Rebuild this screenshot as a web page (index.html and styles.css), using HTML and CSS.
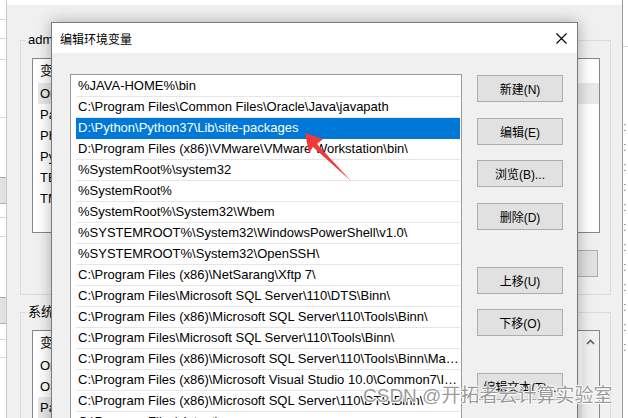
FILE: index.html
```html
<!DOCTYPE html>
<html lang="zh-CN">
<head>
  <meta charset="UTF-8">
  <title>编辑环境变量</title>
  <link rel="stylesheet" href="styles.css">
</head>
<body>
  <div class="desk">
    <div class="edge-left">
      <div class="ln m19"></div>
      <div class="ln m18"></div>
      <div class="ln m20"></div>
      <div class="ln m57"></div>
      <div class="bt m59"></div>
      <div class="ln m13"></div>
      <div class="ln m18"></div>
      <div class="bt m60"></div>
      <div class="ln m15"></div>
      <div class="ln m17"></div>
    </div>

    <div class="win">
      <div class="win-top"></div>
      <fieldset class="group g1">
        <legend>admin 的用户变量(U)</legend>
        <div class="list l1">
          <div class="col">
            <div class="lhead">变量</div>
            <div class="lrow dim">OneDrive</div>
            <div class="lrow">Path</div>
            <div class="lrow">PhpStorm</div>
            <div class="lrow">PyCharm</div>
            <div class="lrow">TEMP</div>
            <div class="lrow">TMP</div>
          </div>
        </div>
        <div class="bar">
          <div class="btn wide">编辑(I)...</div>
        </div>
      </fieldset>
      <fieldset class="group g2">
        <legend>系统变量(S)</legend>
        <div class="list l2">
          <div class="col">
            <div class="lhead">变量</div>
            <div class="lrow">OnlineServices</div>
            <div class="lrow">OS</div>
            <div class="lrow dim">Path</div>
          </div>
          <div class="sb">
            <svg width="9" height="6" viewBox="0 0 9 6"><path d="M1 5 L4.5 1.5 L8 5" fill="none" stroke="#606060" stroke-width="1.6"/></svg>
          </div>
        </div>
      </fieldset>
    </div>

    <div class="edge-right">
      <div class="er-top"></div>
      <div class="er-dots">:<br>:<br>:<br>:<br>:<br>:<br>:<br>:<br>:<br>:<br>:<br>:</div>
    </div>

    <div class="dlg">
      <div class="dlg-title">
        <span>编辑环境变量</span>
        <svg class="close" width="11" height="11" viewBox="0 0 11 11"><path d="M0.5 0.5 L10.5 10.5 M10.5 0.5 L0.5 10.5" stroke="#000" stroke-width="1.1"/></svg>
      </div>
      <div class="dlg-body">
        <div class="plist">
          <div class="prow">%JAVA-HOME%\bin</div>
          <div class="prow">C:\Program Files\Common Files\Oracle\Java\javapath</div>
          <div class="prow sel">D:\Python\Python37\Lib\site-packages</div>
          <div class="prow">D:\Program Files (x86)\VMware\VMware Workstation\bin\</div>
          <div class="prow">%SystemRoot%\system32</div>
          <div class="prow">%SystemRoot%</div>
          <div class="prow">%SystemRoot%\System32\Wbem</div>
          <div class="prow">%SYSTEMROOT%\System32\WindowsPowerShell\v1.0\</div>
          <div class="prow">%SYSTEMROOT%\System32\OpenSSH\</div>
          <div class="prow">C:\Program Files (x86)\NetSarang\Xftp 7\</div>
          <div class="prow">C:\Program Files\Microsoft SQL Server\110\DTS\Binn\</div>
          <div class="prow">C:\Program Files (x86)\Microsoft SQL Server\110\Tools\Binn\</div>
          <div class="prow">C:\Program Files\Microsoft SQL Server\110\Tools\Binn\</div>
          <div class="prow">C:\Program Files (x86)\Microsoft SQL Server\110\Tools\Binn\ManagementStudio\</div>
          <div class="prow">C:\Program Files (x86)\Microsoft Visual Studio 10.0\Common7\IDE\PrivateAssemblies\</div>
          <div class="prow">C:\Program Files (x86)\Microsoft SQL Server\110\DTS\Binn\</div>
          <div class="prow">C:\Program Files\dotnet\</div>
        </div>
        <div class="btns">
          <div class="btn">新建(N)</div>
          <div class="btn m16">编辑(E)</div>
          <div class="btn m15">浏览(B)...</div>
          <div class="btn m16">删除(D)</div>
          <div class="btn m37">上移(U)</div>
          <div class="btn m15">下移(O)</div>
          <div class="btn m37">编辑文本(T)...</div>
        </div>
      </div>
    </div>

    <svg class="arrow" width="628" height="418" viewBox="0 0 628 418">
      <polygon points="305,133 323,139 317,144 351,181 313,147 309,153" fill="#ef3a3a"/>
    </svg>

    <div class="mark">CSDN @开拓者云计算实验室</div>
  </div>
</body>
</html>
```

FILE: styles.css
```css
* {
  box-sizing: border-box;
}

html, body {
  margin: 0;
}

body {
  width: 628px;
  height: 418px;
  overflow: hidden;
  font-family: "Liberation Sans", "Noto Sans CJK SC", sans-serif;
  font-size: 13px;
  color: #000;
  background: #f0f0f0;
}

.desk {
  position: relative;
  display: grid;
  grid-template-columns: 7px 1fr 6px;
  height: 418px;
  overflow: hidden;
}

/* window sliver on the far left */
.edge-left {
  background: #fff;
  border-right: 1px solid #c8c8c8;
  display: flex;
  flex-direction: column;
}

.edge-left .ln {
  height: 1px;
  flex: none;
  background: #dadada;
}

.edge-left .bt {
  height: 27px;
  flex: none;
  background: #e1e1e1;
  border-top: 1px solid #adadad;
  border-bottom: 1px solid #adadad;
}

.m13 { margin-top: 13px; }
.m15 { margin-top: 15px; }
.m16 { margin-top: 16px; }
.m17 { margin-top: 17px; }
.m18 { margin-top: 18px; }
.m19 { margin-top: 19px; }
.m20 { margin-top: 20px; }
.m37 { margin-top: 37px; }
.m57 { margin-top: 57px; }
.m59 { margin-top: 59px; }
.m60 { margin-top: 60px; }

/* background window */
.win {
  background: #f0f0f0;
  display: flex;
  flex-direction: column;
  min-width: 0;
}

.win-top {
  height: 5px;
  flex: none;
  background: #fff;
}

.group {
  border: 1px solid #dcdcdc;
  margin: 27px 11px 0 13px;
  padding: 10px 10px 17px 11px;
  min-width: 0;
  flex: none;
}

.group legend {
  padding: 0 2px;
  margin-left: -6px;
  line-height: 16px;
  font-size: 13px;
  white-space: nowrap;
}

.g2 {
  margin-top: 9px;
}

.list {
  background: #fff;
  border: 1px solid #828790;
  display: flex;
  overflow: hidden;
}

.l1 {
  height: 175px;
}

.l2 {
  height: 200px;
}

.list .col {
  flex: 1;
}

.lhead {
  height: 24px;
  line-height: 24px;
  padding-left: 7px;
}

.lrow {
  height: 21px;
  line-height: 21px;
  margin-left: 5px;
  padding-left: 2px;
  white-space: nowrap;
}

.lrow.dim {
  background: #e8e8e8;
}

.sb {
  width: 17px;
  background: #f0f0f0;
  display: flex;
  justify-content: center;
  padding-top: 8px;
}

.bar {
  display: flex;
  justify-content: flex-end;
  margin-top: 17px;
  padding-right: 2px;
}

/* right window sliver */
.edge-right {
  background: #fff;
  border-left: 1px solid #9a9a9a;
  overflow: hidden;
}

.er-top {
  height: 47px;
  border-bottom: 1px solid #d6d6d6;
}

.er-dots {
  padding-top: 70px;
  color: #3d7fc4;
  font-size: 12px;
  line-height: 20px;
}

/* dialog */
.dlg {
  position: absolute;
  left: 51px;
  top: 22px;
  width: 527px;
  height: 420px;
  background: #f0f0f0;
  border: 1px solid #7a7a7a;
  box-shadow: 0 0 14px rgba(0, 0, 0, 0.3);
}

.dlg-title {
  height: 30px;
  background: #fff;
  display: flex;
  align-items: center;
  justify-content: space-between;
  padding: 0 10px 0 8px;
  font-size: 12px;
}

.dlg-body {
  display: flex;
  padding: 21px 0 0 18px;
}

.plist {
  width: 392px;
  height: 360px;
  background: #fff;
  border: 1px solid #9a9a9a;
  padding-top: 1px;
  overflow: hidden;
  flex: none;
}

.prow {
  height: 21px;
  line-height: 20px;
  border-bottom: 1px solid #e6e6e6;
  margin: 0 1px 0 5px;
  padding-left: 2px;
  white-space: nowrap;
  overflow: hidden;
  text-overflow: ellipsis;
}

.prow.sel {
  background: #0078d7;
  color: #fff;
  border-bottom-color: #0078d7;
}

.btns {
  display: flex;
  flex-direction: column;
  margin-left: 15px;
  padding-top: 1px;
}

.btn {
  width: 86px;
  height: 27px;
  flex: none;
  background: #e1e1e1;
  border: 1px solid #adadad;
  font-size: 12px;
  display: flex;
  align-items: center;
  justify-content: center;
  white-space: nowrap;
}

.btn.wide {
  width: 100px;
}

/* annotations on top */
.arrow {
  position: absolute;
  left: 0;
  top: 0;
}

.mark {
  position: absolute;
  left: 363px;
  top: 383px;
  font-size: 19px;
  line-height: 26px;
  color: rgba(120, 120, 120, 0.75);
  text-shadow: 1px 0 #fff, -1px 0 #fff, 0 1px #fff, 0 -1px #fff;
  white-space: nowrap;
}
```
